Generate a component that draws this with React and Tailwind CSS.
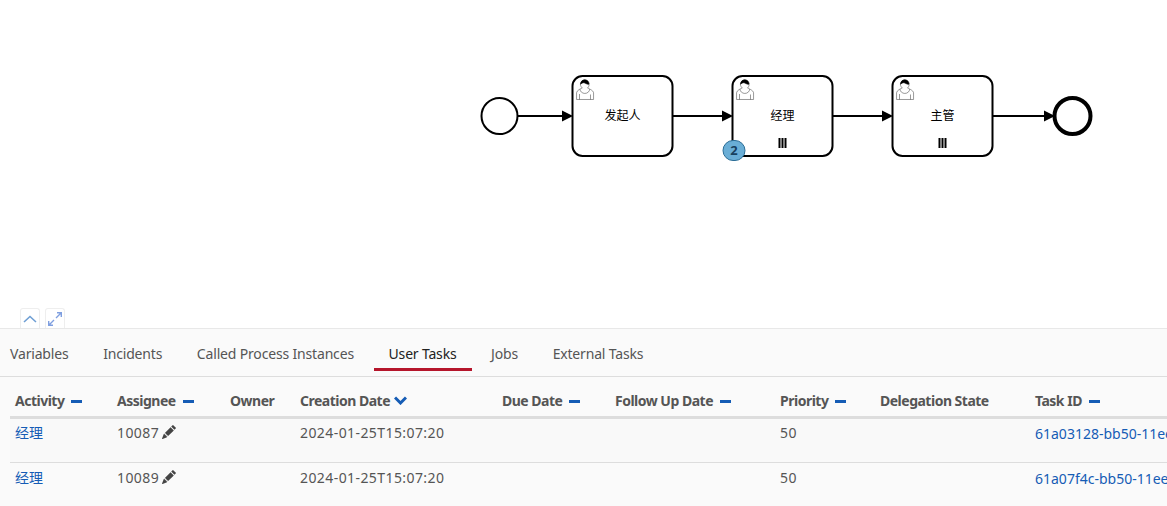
import React from 'react';
import { BsPencilFill } from 'react-icons/bs';

const font = '"Noto Sans", "Noto Sans CJK SC", sans-serif';

const tabs = ['Variables', 'Incidents', 'Called Process Instances', 'User Tasks', 'Jobs', 'External Tasks'];

const columns = [
  { label: 'Activity', width: 'w-[102px]', sort: 'none' },
  { label: 'Assignee', width: 'w-[113px]', sort: 'none' },
  { label: 'Owner', width: 'w-[70px]' },
  { label: 'Creation Date', width: 'w-[202px]', sort: 'desc' },
  { label: 'Due Date', width: 'w-[113px]', sort: 'none' },
  { label: 'Follow Up Date', width: 'w-[165px]', sort: 'none' },
  { label: 'Priority', width: 'w-[100px]', sort: 'none' },
  { label: 'Delegation State', width: 'w-[155px]' },
  { label: 'Task ID', width: 'w-[300px]', sort: 'none' },
];

const rows = [
  { assignee: '10087', id: '61a03128-bb50-11ee-8f3c', bg: 'bg-[#f9f9f9]', pad: 'pt-[3px]', idPad: 'pt-[4px]' },
  { assignee: '10089', id: '61a07f4c-bb50-11ee-8f3c', bg: '', pad: 'pt-[4px]', idPad: 'pt-[5px]' },
];

const UserIcon = ({ x, y }) => {
  const mx = x + 15;
  const my = y + 12;
  return (
    <g>
      <path
        d={`m ${mx},${my} c 0.909,-0.845 1.594,-2.049 1.594,-3.385 0,-2.554 -1.805,-4.622 -4.357,-4.622 -2.552,0 -4.288,2.068 -4.288,4.622 0,1.348 0.974,2.562 1.896,3.405 -0.529,0.187 -5.669,2.097 -5.794,4.756 v 6.718 h 17 v -6.718 c 0,-2.298 -5.528,-4.595 -6.051,-4.776 z m -8,6 l 0,5.5 m 11,0 l 0,-5`}
        fill="#fff"
        stroke="#555"
        strokeWidth="0.6"
      />
      <path
        d={`m ${mx},${my} m 2.162,1.009 c 0,2.447 -2.158,4.431 -4.821,4.431 -2.665,0 -4.822,-1.981 -4.822,-4.431`}
        fill="#fff"
        stroke="#555"
        strokeWidth="0.6"
      />
      <path
        d={`m ${mx},${my} m -6.9,-3.8 c 0,0 2.251,-2.358 4.274,-1.177 2.024,1.181 4.221,1.537 4.124,0.965 -0.098,-0.57 -0.117,-3.791 -4.191,-4.136 -3.575,0.001 -4.208,3.367 -4.207,4.348 z`}
        fill="#000"
        stroke="#000"
        strokeWidth="0.6"
      />
    </g>
  );
};

const Flow = ({ from, to }) => (
  <g>
    <line x1={from} y1="116" x2={to - 8} y2="116" stroke="#000" strokeWidth="2" />
    <path d={`M ${to},116 L ${to - 11},110.5 L ${to - 11},121.5 Z`} fill="#000" />
  </g>
);

const Task = ({ x, label, multi }) => (
  <g>
    <rect x={x} y="76" width="100" height="80" rx="10" fill="#fff" stroke="#000" strokeWidth="2" />
    <UserIcon x={x} y={76} />
    <text x={x + 50} y="120" textAnchor="middle" fontSize="12" fill="#000" style={{ fontFamily: font }}>
      {label}
    </text>
    {multi && (
      <g fill="#000">
        <rect x={x + 46} y="138" width="2" height="10" />
        <rect x={x + 49} y="138" width="2" height="10" />
        <rect x={x + 52} y="138" width="2" height="10" />
      </g>
    )}
  </g>
);

const Diagram = () => (
  <svg className="block w-full h-full" viewBox="0 0 1167 328">
    <circle cx="499.5" cy="116" r="18" fill="#fff" stroke="#000" strokeWidth="2" />
    <Task x={572.5} label="发起人" />
    <Task x={732.5} label="经理" multi />
    <Task x={892.5} label="主管" multi />
    <circle cx="1072.5" cy="116" r="18" fill="#fff" stroke="#000" strokeWidth="4" />
    <Flow from={518} to={573} />
    <Flow from={673} to={733} />
    <Flow from={833} to={893} />
    <Flow from={993} to={1055} />
    <rect x="723" y="140.5" width="22" height="20" rx="10" fill="#6aaed6" stroke="#2b6d96" />
    <text x="734" y="155" textAnchor="middle" fontSize="13" fontWeight="700" fill="#17405e" style={{ fontFamily: font }}>
      2
    </text>
  </svg>
);

const SortMark = ({ sort }) => {
  if (sort === 'desc') {
    return (
      <svg className="inline-block ml-[4px] align-[1px]" width="13" height="9" viewBox="0 0 13 9" fill="none" stroke="#155cb5" strokeWidth="3">
        <path d="M1 1.5 L6.5 7 L12 1.5" />
      </svg>
    );
  }
  if (sort === 'none') return <span className="inline-block ml-[7px] w-[11px] h-[3px] bg-[#155cb5] align-[3px]" />;
  return null;
};

export default function App() {
  return (
    <div className="w-[1167px] h-[506px] overflow-hidden bg-white" style={{ fontFamily: font }}>
      {/* Diagram canvas */}
      <div className="relative h-[328px]">
        <Diagram />
        <div className="absolute left-[20px] bottom-0 flex gap-[5px]">
          <button className="w-[20px] h-[20px] flex items-center justify-center border border-b-0 border-[#eeeeee] rounded-t-[3px] bg-white">
            <svg width="14" height="8" viewBox="0 0 14 8" fill="none" stroke="#6f9fd4" strokeWidth="1.6">
              <path d="M1 7 L7 1.5 L13 7" />
            </svg>
          </button>
          <button className="w-[20px] h-[20px] flex items-center justify-center border border-b-0 border-[#eeeeee] rounded-t-[3px] bg-white">
            <svg width="16" height="16" viewBox="0 0 16 16" fill="none" stroke="#7f9fe0" strokeWidth="1.4">
              <path d="M9 7 L14 2 M10 1.7 H14.3 V6" />
              <path d="M7 9 L2 14 M6 14.3 H1.7 V10" />
            </svg>
          </button>
        </div>
      </div>

      {/* Tabs and task table */}
      <div className="h-[178px] bg-[#fafafa] border-t border-[#e8e8e8] overflow-hidden">
        <ul className="flex gap-[4.6px] ml-[-5px] h-[48px] border-b border-[#dddddd]">
          {tabs.map((tab) => (
            <li
              key={tab}
              className={
                tab === 'User Tasks'
                  ? 'px-[15px] pt-[15px] h-[42px] text-[14px] tracking-[-0.17px] leading-[20px] whitespace-nowrap text-[#222222] border-b-[3px] border-[#b5152b]'
                  : 'px-[15px] pt-[15px] h-[42px] text-[14px] tracking-[-0.17px] leading-[20px] whitespace-nowrap text-[#555555]'
              }
            >
              {tab}
            </li>
          ))}
        </ul>
        <div className="pl-[10px]">
          <table className="table-fixed border-collapse w-[1320px]">
            <thead>
              <tr className="h-[40px] border-b-[3px] border-[#dddddd]">
                {columns.map((col) => (
                  <th key={col.label} className={`${col.width} px-[5px] pt-[9px] text-left text-[14px] tracking-[-0.5px] font-bold text-[#555555] whitespace-nowrap`}>
                    {col.label}
                    <SortMark sort={col.sort} />
                  </th>
                ))}
              </tr>
            </thead>
            <tbody>
              {rows.map((row) => (
                <tr key={row.assignee} className={`h-[45px] border-b border-[#dddddd] last:border-b-0 align-top text-[14px] text-[#555555] ${row.bg}`}>
                  <td className={`px-[5px] ${row.pad} text-[#155cb5]`}>经理</td>
                  <td className={`px-[5px] ${row.pad} tracking-[0.4px]`}>
                    {row.assignee}
                    <BsPencilFill className="inline-block ml-[3px] w-[14px] h-[14px] text-[#444444] align-[-1px]" />
                  </td>
                  <td />
                  <td className={`px-[5px] ${row.pad} tracking-[0.42px]`}>2024-01-25T15:07:20</td>
                  <td />
                  <td />
                  <td className={`px-[5px] ${row.pad} tracking-[0.4px]`}>50</td>
                  <td />
                  <td className={`px-[5px] ${row.idPad} text-[#155cb5] whitespace-nowrap`}>{row.id}</td>
                </tr>
              ))}
            </tbody>
          </table>
        </div>
      </div>
    </div>
  );
}
